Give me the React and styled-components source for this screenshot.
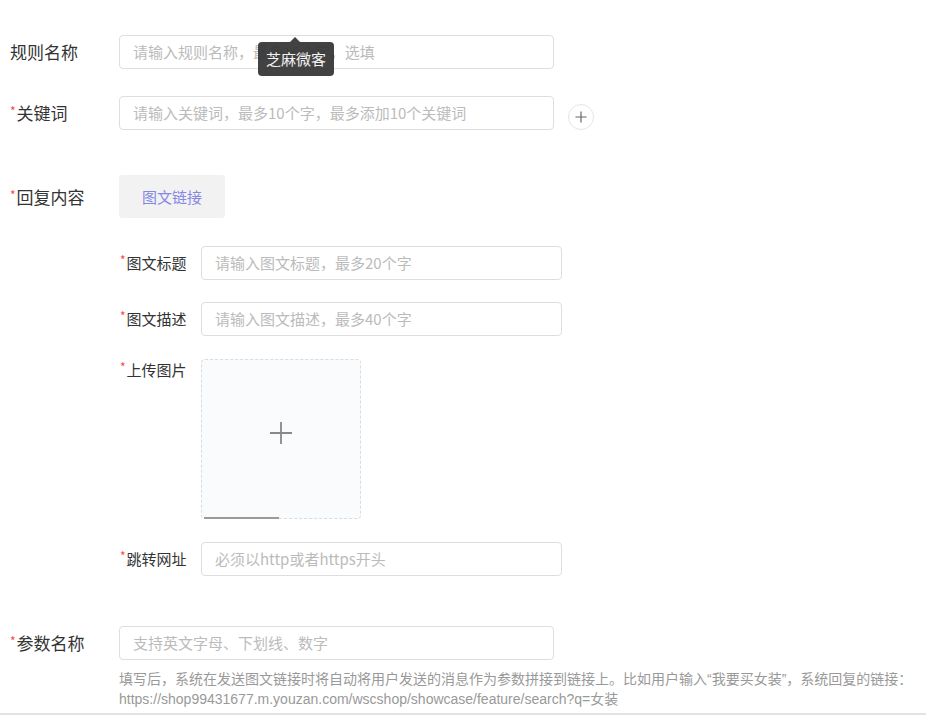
import React from 'react';
import styled, { createGlobalStyle } from 'styled-components';

const GlobalStyle = createGlobalStyle`
  body {
    margin: 0;
    background: #fff;
    font-family: "Liberation Sans", "Noto Sans CJK SC", sans-serif;
    color: #333;
  }
`;

const Page = styled.div`
  width: 926px;
  height: 715px;
  box-sizing: border-box;
  padding-top: 35px;
  overflow: hidden;
`;

const Row = styled.div`
  display: flex;
  align-items: ${props => (props.align ? props.align : 'center')};
  margin-bottom: ${props => props.gap || 0}px;
  margin-left: ${props => props.indent || 0}px;
`;

const Label = styled.div`
  width: ${props => props.width || 119}px;
  height: ${props => props.lh || 34}px;
  box-sizing: content-box;
  padding-left: ${props => (props.indent === undefined ? 10 : props.indent)}px;
  font-size: ${props => props.size || 17}px;
  line-height: ${props => props.lh || 34}px;
  padding-top: ${props => props.top || 0}px;
  color: #333;
  white-space: nowrap;
  font-family: "Noto Sans CJK SC", sans-serif;
  flex-shrink: 0;
  margin-right: ${props => -(props.indent === undefined ? 10 : props.indent)}px;
`;

const Star = styled.span`
  color: #f44;
  font-size: 12px;
  line-height: 0;
  margin-right: 1px;
  position: relative;
  top: -4px;
`;

const InputWrap = styled.div`
  position: relative;
`;

const Input = styled.div`
  width: ${props => props.width || 435}px;
  height: 34px;
  box-sizing: border-box;
  border: 1px solid #dcdee2;
  border-radius: 4px;
  padding-left: 13px;
  font-size: 15px;
  line-height: 32px;
  color: #bbb;
  white-space: nowrap;
  overflow: hidden;
  font-family: "Noto Sans CJK SC", sans-serif;
`;

const Tooltip = styled.div`
  position: absolute;
  left: 139px;
  top: 7px;
  width: 76px;
  height: 34px;
  background: rgba(50, 50, 50, 0.92);
  border-radius: 4px;
  color: #f2f2f2;
  font-size: 15px;
  line-height: 34px;
  text-align: center;
  font-family: "Noto Sans CJK SC", sans-serif;
  &::before {
    content: '';
    position: absolute;
    left: 32px;
    top: -5px;
    border-left: 5px solid transparent;
    border-right: 5px solid transparent;
    border-bottom: 5px solid rgba(50, 50, 50, 0.92);
  }
`;

const AddCircle = styled.div`
  width: 24px;
  height: 24px;
  margin-left: 14px;
  margin-top: 8px;
  border: 1px solid #e6e6e6;
  border-radius: 50%;
  display: flex;
  align-items: center;
  justify-content: center;
  color: #666;
`;

const Tab = styled.div`
  width: 106px;
  height: 43px;
  background: #f2f2f3;
  border-radius: 3px;
  color: #8688e4;
  font-size: 15px;
  line-height: 43px;
  text-align: center;
  font-family: "Noto Sans CJK SC", sans-serif;
`;

const Upload = styled.div`
  position: relative;
  width: 160px;
  height: 160px;
  box-sizing: border-box;
  border: 1px dashed #d9dce0;
  border-radius: 4px;
  background: #fafbfc;
  display: flex;
  align-items: center;
  justify-content: center;
  padding-bottom: 12px;
`;

const UploadBar = styled.div`
  position: absolute;
  left: 2px;
  bottom: -1px;
  width: 75px;
  height: 2px;
  background: #9a9a9a;
`;

const Help = styled.div`
  margin: 9px 0 0 119px;
  font-size: 14px;
  line-height: 20px;
  color: #999;
  white-space: nowrap;
  padding-bottom: 4px;
`;

const BottomLine = styled.div`
  border-top: 2px solid #e3e3e3;
`;

function Plus({ size, stroke, color }) {
  return (
    <svg width={size} height={size} viewBox="0 0 24 24">
      <path d="M12 1v22M1 12h22" stroke={color} strokeWidth={stroke} fill="none" />
    </svg>
  );
}

function SubRow({ label, placeholder, gap }) {
  return (
    <Row indent={119} gap={gap}>
      <Label width={82} indent={1} size={15}>
        <Star>*</Star>
        {label}
      </Label>
      <Input width={361}>{placeholder}</Input>
    </Row>
  );
}

export default function App() {
  return (
    <Page>
      <GlobalStyle />
      <Row gap={27}>
        <Label>规则名称</Label>
        <InputWrap>
          <Input>请输入规则名称，最多16个字，选填</Input>
          <Tooltip>芝麻微客</Tooltip>
        </InputWrap>
      </Row>
      <Row gap={45} align="flex-start">
        <Label>
          <Star>*</Star>关键词
        </Label>
        <Input>请输入关键词，最多10个字，最多添加10个关键词</Input>
        <AddCircle>
          <Plus size={12} stroke={2.4} color="#666" />
        </AddCircle>
      </Row>
      <Row gap={28}>
        <Label>
          <Star>*</Star>回复内容
        </Label>
        <Tab>图文链接</Tab>
      </Row>
      <SubRow label="图文标题" placeholder="请输入图文标题，最多20个字" gap={22} />
      <SubRow label="图文描述" placeholder="请输入图文描述，最多40个字" gap={23} />
      <Row indent={119} gap={23} align="flex-start">
        <Label width={82} indent={1} size={15} lh={22}>
          <Star>*</Star>上传图片
        </Label>
        <Upload>
          <Plus size={24} stroke={1.8} color="#888" />
          <UploadBar />
        </Upload>
      </Row>
      <SubRow label="跳转网址" placeholder="必须以http或者https开头" gap={50} />
      <Row>
        <Label>
          <Star>*</Star>参数名称
        </Label>
        <Input>支持英文字母、下划线、数字</Input>
      </Row>
      <Help>
        填写后，系统在发送图文链接时将自动将用户发送的消息作为参数拼接到链接上。比如用户输入“我要买女装”，系统回复的链接：
        <br />
        https://shop99431677.m.youzan.com/wscshop/showcase/feature/search?q=女装
      </Help>
      <BottomLine />
    </Page>
  );
}
